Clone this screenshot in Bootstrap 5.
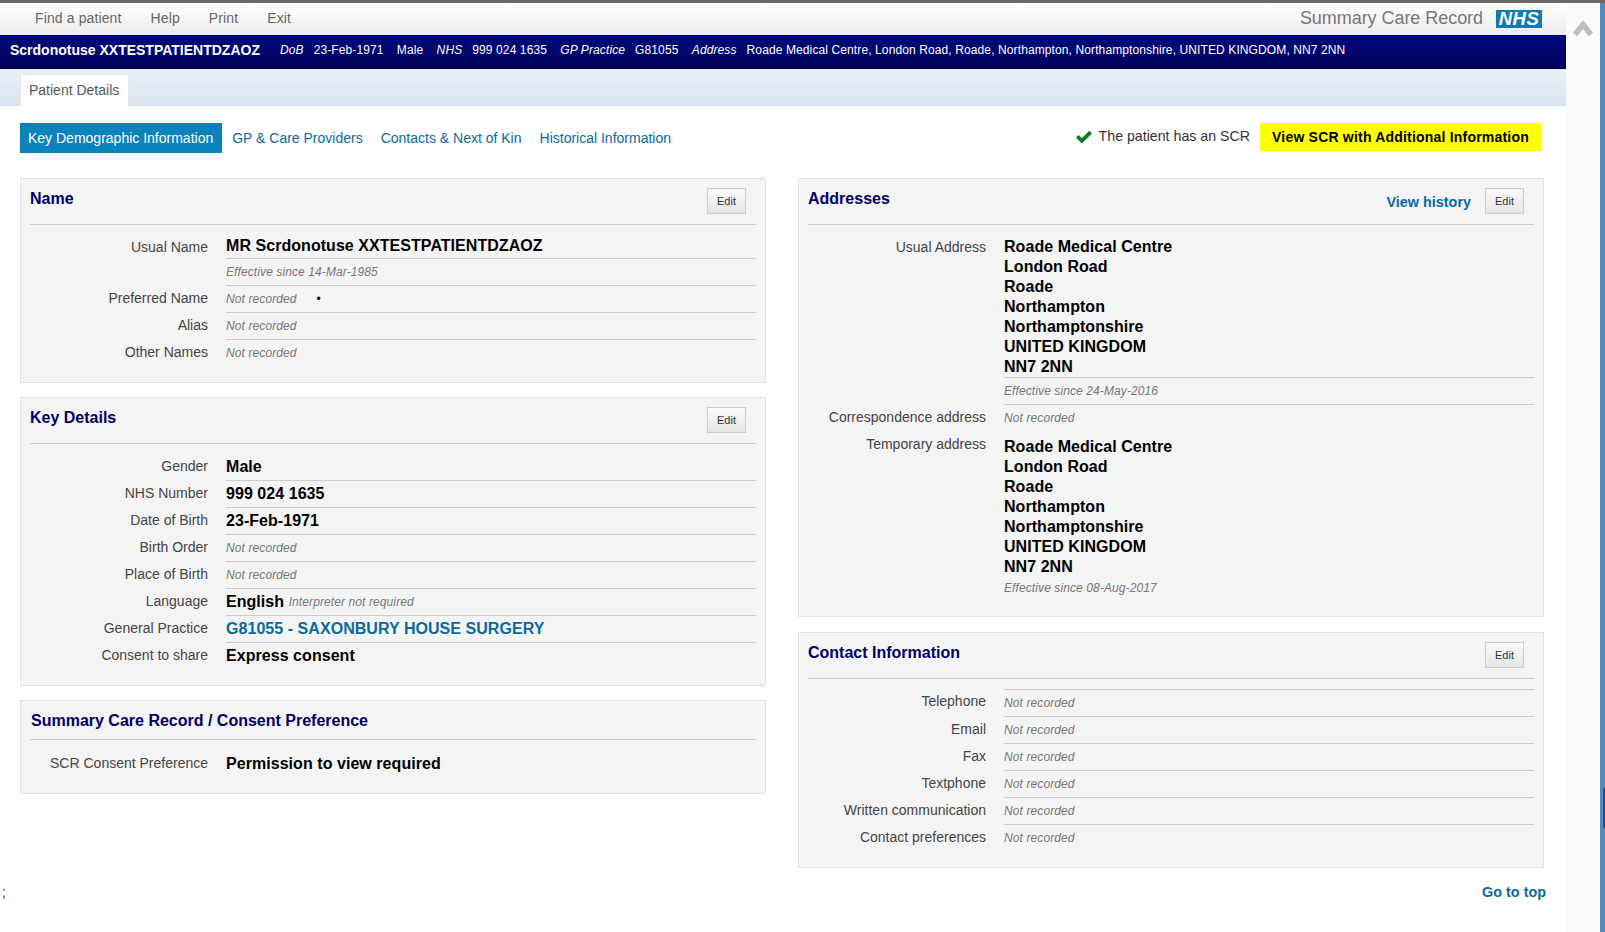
<!DOCTYPE html>
<html lang="en">
<head>
<meta charset="utf-8">
<title>Summary Care Record</title>
<link href="https://cdn.jsdelivr.net/npm/bootstrap@5.3.0/dist/css/bootstrap.min.css" rel="stylesheet">
<style>
html,body{height:932px;overflow:hidden;}
body{font-family:"Liberation Sans",Arial,sans-serif;font-size:14px;color:#333;background:#fff;}
.shell{height:932px;border-top:3px solid #6a6a6a;}
.mainpane{width:1566px;flex:none;}
.gutter{width:34px;flex:none;background:#fafafa;padding:15px 0 0 7px;}
.edgebar{width:5px;flex:none;background:#4f8cc6;}
.edgemark{width:2px;height:40px;margin:785px 0 0 3px;background:#1a4f9c;}
.topbar{height:32px;background:linear-gradient(#fff,#ebebeb);padding:0 24px 2px 35px;}
.topbar a{color:#666;text-decoration:none;font-size:14px;letter-spacing:.12px;margin-right:29px;}
.scrtitle{font-size:18px;letter-spacing:-.05px;color:#777;margin-right:13px;}
.nhslogo{background:#1279b4;color:#fff;font-weight:700;font-style:italic;font-size:18.5px;line-height:18px;width:46px;height:18px;margin-top:2px;text-align:center;letter-spacing:.4px;}
.patbar{height:34px;background:linear-gradient(#000a80,#000055);color:#fff;font-size:12px;letter-spacing:.11px;padding:0 0 4px 10px;white-space:nowrap;}
.patbar b{font-size:14px;letter-spacing:0;margin-right:20px;}
.patbar i{margin-right:10px;}
.patbar span{margin-right:13.3px;}
.tabband{height:37px;background:linear-gradient(#e9eff7,#dae5f2);padding:5px 0 0 20px;border-bottom:1px solid #d5dde8;}
.tabband .nav-link{background:#fff;color:#555;font-size:14px;height:32px;width:109px;padding:5px 0 0 8px;border:1px solid #e4e9f0;border-bottom:0;border-radius:0;}
.subnav{margin:17px 25px 25px 0;padding-left:20px;height:30px;}
.subnav .nav-link{color:#0b6a9c;font-size:14px;padding:5px 8px;margin-right:2px;border-radius:0;height:30px;}
.subnav .nav-link.active{background:#0b82b9;color:#fff;padding-right:9px;}
.tickmark{margin:-2px 6px 0 auto;}
.scrnote{font-size:14.2px;color:#333;margin:-2px 10px 0 0;}
.scrbtn{background:#ff0;color:#000;font-weight:700;font-size:14px;letter-spacing:.2px;border:0;border-radius:0;height:28px;width:281px;padding:0;margin-top:-2px;}
.scrbtn:hover{background:#ff0;color:#000;}
.columns{padding-left:20px;gap:32px;}
.colblock{width:746px;flex:none;gap:15px;}
.colblock.tightstack{gap:14px;}
.panelbox{background:#f4f4f4;border:1px solid #e2e2e2;padding:0 9px 15px;}
.panelhead{height:46px;border-bottom:1px solid #ccc;padding:0 10px 0 0;}
.panelhead h2{font-size:16px;font-weight:700;color:#000066;margin:11px 0 0;line-height:18px;}
.slimhead{height:39px;}
.slimhead h2{margin-left:1px;}
.slimhead + .rowset{margin-top:11px;}
.editbtn{width:39px;height:26px;font-size:11px;color:#333;padding:0;background:linear-gradient(#fafafa,#e6e6e6);border:1px solid #ccc;border-radius:0;margin-top:9px;}
.histlink{font-weight:700;font-size:14.4px;color:#0b6a9c;text-decoration:none;margin:13px 14px 0 0;}
.rowset{margin-top:10px;}
.rowset.gapped{margin-top:12px;}
.inforow{display:flex;}
.infokey{width:178px;flex:none;text-align:right;font-size:14px;line-height:24px;color:#444;}
.infokey.tight{line-height:20px;}
.infoval{flex:1;margin-left:18px;min-height:27px;line-height:26px;border-bottom:1px solid #ccc;font-size:16px;font-weight:700;color:#000;letter-spacing:.05px;}
.infoval.plain{border-bottom-color:transparent;}
.infoval.toprule{border-top:1px solid #ccc;}
.infoval.short{min-height:21px;line-height:18px;padding-top:2px;}
.infoval.addr{line-height:20px;}
.infoval.padtop{padding-top:3px;}
.infoval.compact{min-height:23px;line-height:20px;}
.rowspaced{margin-bottom:2px;}
.muted{font-size:12px;line-height:1;vertical-align:1px;font-weight:400;font-style:italic;color:#777;letter-spacing:.1px;}
.bullet{font-style:normal;color:#000;margin-left:20px;}
.gplink{color:#0b6a9c;text-decoration:none;}
.footline{margin-top:14px;padding:0 20px 0 2px;line-height:20px;}
.footline a{font-weight:700;font-size:14.4px;color:#0b6a9c;text-decoration:none;}
</style>
</head>
<body>
<div class="shell d-flex">
  <div class="mainpane">
    <nav class="topbar d-flex align-items-center">
      <a href="#">Find a patient</a><a href="#">Help</a><a href="#">Print</a><a href="#">Exit</a>
      <span class="scrtitle ms-auto">Summary Care Record</span>
      <div class="nhslogo">NHS</div>
    </nav>
    <div class="patbar d-flex align-items-center">
      <b>Scrdonotuse XXTESTPATIENTDZAOZ</b>
      <i>DoB</i><span>23-Feb-1971</span><span>Male</span>
      <i>NHS</i><span>999 024 1635</span>
      <i>GP Practice</i><span>G81055</span>
      <i>Address</i><span>Roade Medical Centre, London Road, Roade, Northampton, Northamptonshire, UNITED KINGDOM, NN7 2NN</span>
    </div>
    <div class="tabband">
      <ul class="nav"><li class="nav-item"><a class="nav-link" href="#">Patient Details</a></li></ul>
    </div>
    <div class="subnav d-flex align-items-center">
      <ul class="nav">
        <li class="nav-item"><a class="nav-link active" href="#">Key Demographic Information</a></li>
        <li class="nav-item"><a class="nav-link" href="#">GP &amp; Care Providers</a></li>
        <li class="nav-item"><a class="nav-link" href="#">Contacts &amp; Next of Kin</a></li>
        <li class="nav-item"><a class="nav-link" href="#">Historical Information</a></li>
      </ul>
      <svg class="tickmark" width="18" height="14" viewBox="0 0 18 14"><path d="M1 7.5 3.6 5 6.8 8.2 14.4 .8 17 3.4 6.8 13.4Z" fill="#0a7a1e"/></svg>
      <span class="scrnote">The patient has an SCR</span>
      <button class="btn scrbtn" type="button">View SCR with Additional Information</button>
    </div>
    <div class="columns d-flex">
      <div class="colblock tightstack d-flex flex-column">
        <section class="panelbox">
          <div class="panelhead d-flex justify-content-between"><h2>Name</h2><button class="btn editbtn" type="button">Edit</button></div>
          <div class="rowset">
            <div class="inforow"><div class="infokey">Usual Name</div><div class="infoval short">MR Scrdonotuse XXTESTPATIENTDZAOZ</div></div>
            <div class="inforow"><div class="infokey"></div><div class="infoval"><span class="muted">Effective since 14-Mar-1985</span></div></div>
            <div class="inforow"><div class="infokey">Preferred Name</div><div class="infoval"><span class="muted">Not recorded<span class="bullet">•</span></span></div></div>
            <div class="inforow"><div class="infokey">Alias</div><div class="infoval"><span class="muted">Not recorded</span></div></div>
            <div class="inforow"><div class="infokey">Other Names</div><div class="infoval plain"><span class="muted">Not recorded</span></div></div>
          </div>
        </section>
        <section class="panelbox">
          <div class="panelhead d-flex justify-content-between"><h2>Key Details</h2><button class="btn editbtn" type="button">Edit</button></div>
          <div class="rowset">
            <div class="inforow"><div class="infokey">Gender</div><div class="infoval">Male</div></div>
            <div class="inforow"><div class="infokey">NHS Number</div><div class="infoval">999 024 1635</div></div>
            <div class="inforow"><div class="infokey">Date of Birth</div><div class="infoval">23-Feb-1971</div></div>
            <div class="inforow"><div class="infokey">Birth Order</div><div class="infoval"><span class="muted">Not recorded</span></div></div>
            <div class="inforow"><div class="infokey">Place of Birth</div><div class="infoval"><span class="muted">Not recorded</span></div></div>
            <div class="inforow"><div class="infokey">Language</div><div class="infoval">English <span class="muted">Interpreter not required</span></div></div>
            <div class="inforow"><div class="infokey">General Practice</div><div class="infoval"><a class="gplink" href="#">G81055 - SAXONBURY HOUSE SURGERY</a></div></div>
            <div class="inforow"><div class="infokey">Consent to share</div><div class="infoval plain">Express consent</div></div>
          </div>
        </section>
        <section class="panelbox">
          <div class="panelhead slimhead d-flex"><h2>Summary Care Record / Consent Preference</h2></div>
          <div class="rowset">
            <div class="inforow"><div class="infokey">SCR Consent Preference</div><div class="infoval plain">Permission to view required</div></div>
          </div>
        </section>
      </div>
      <div class="colblock d-flex flex-column">
        <section class="panelbox">
          <div class="panelhead d-flex"><h2 class="me-auto">Addresses</h2><a class="histlink" href="#">View history</a><button class="btn editbtn" type="button">Edit</button></div>
          <div class="rowset gapped">
            <div class="inforow"><div class="infokey tight">Usual Address</div><div class="infoval addr">Roade Medical Centre<br>London Road<br>Roade<br>Northampton<br>Northamptonshire<br>UNITED KINGDOM<br>NN7 2NN</div></div>
            <div class="inforow"><div class="infokey"></div><div class="infoval"><span class="muted">Effective since 24-May-2016</span></div></div>
            <div class="inforow rowspaced"><div class="infokey">Correspondence address</div><div class="infoval plain"><span class="muted">Not recorded</span></div></div>
            <div class="inforow"><div class="infokey tight">Temporary address</div><div class="infoval addr padtop plain">Roade Medical Centre<br>London Road<br>Roade<br>Northampton<br>Northamptonshire<br>UNITED KINGDOM<br>NN7 2NN</div></div>
            <div class="inforow"><div class="infokey"></div><div class="infoval compact plain"><span class="muted">Effective since 08-Aug-2017</span></div></div>
          </div>
        </section>
        <section class="panelbox">
          <div class="panelhead d-flex justify-content-between"><h2>Contact Information</h2><button class="btn editbtn" type="button">Edit</button></div>
          <div class="rowset">
            <div class="inforow"><div class="infokey">Telephone</div><div class="infoval toprule"><span class="muted">Not recorded</span></div></div>
            <div class="inforow"><div class="infokey">Email</div><div class="infoval"><span class="muted">Not recorded</span></div></div>
            <div class="inforow"><div class="infokey">Fax</div><div class="infoval"><span class="muted">Not recorded</span></div></div>
            <div class="inforow"><div class="infokey">Textphone</div><div class="infoval"><span class="muted">Not recorded</span></div></div>
            <div class="inforow"><div class="infokey">Written communication</div><div class="infoval"><span class="muted">Not recorded</span></div></div>
            <div class="inforow"><div class="infokey">Contact preferences</div><div class="infoval plain"><span class="muted">Not recorded</span></div></div>
          </div>
        </section>
      </div>
    </div>
    <div class="footline d-flex justify-content-between"><span>;</span><a href="#">Go to top</a></div>
  </div>
  <div class="gutter"><svg width="20" height="16" viewBox="0 0 20 16"><path d="M2 13.5 10 3.5 18 13.5" fill="none" stroke="#bdbdbd" stroke-width="5.5"/></svg></div>
  <div class="edgebar"><div class="edgemark"></div></div>
</div>
<script src="https://cdn.jsdelivr.net/npm/bootstrap@5.3.0/dist/js/bootstrap.bundle.min.js"></script>
</body>
</html>
